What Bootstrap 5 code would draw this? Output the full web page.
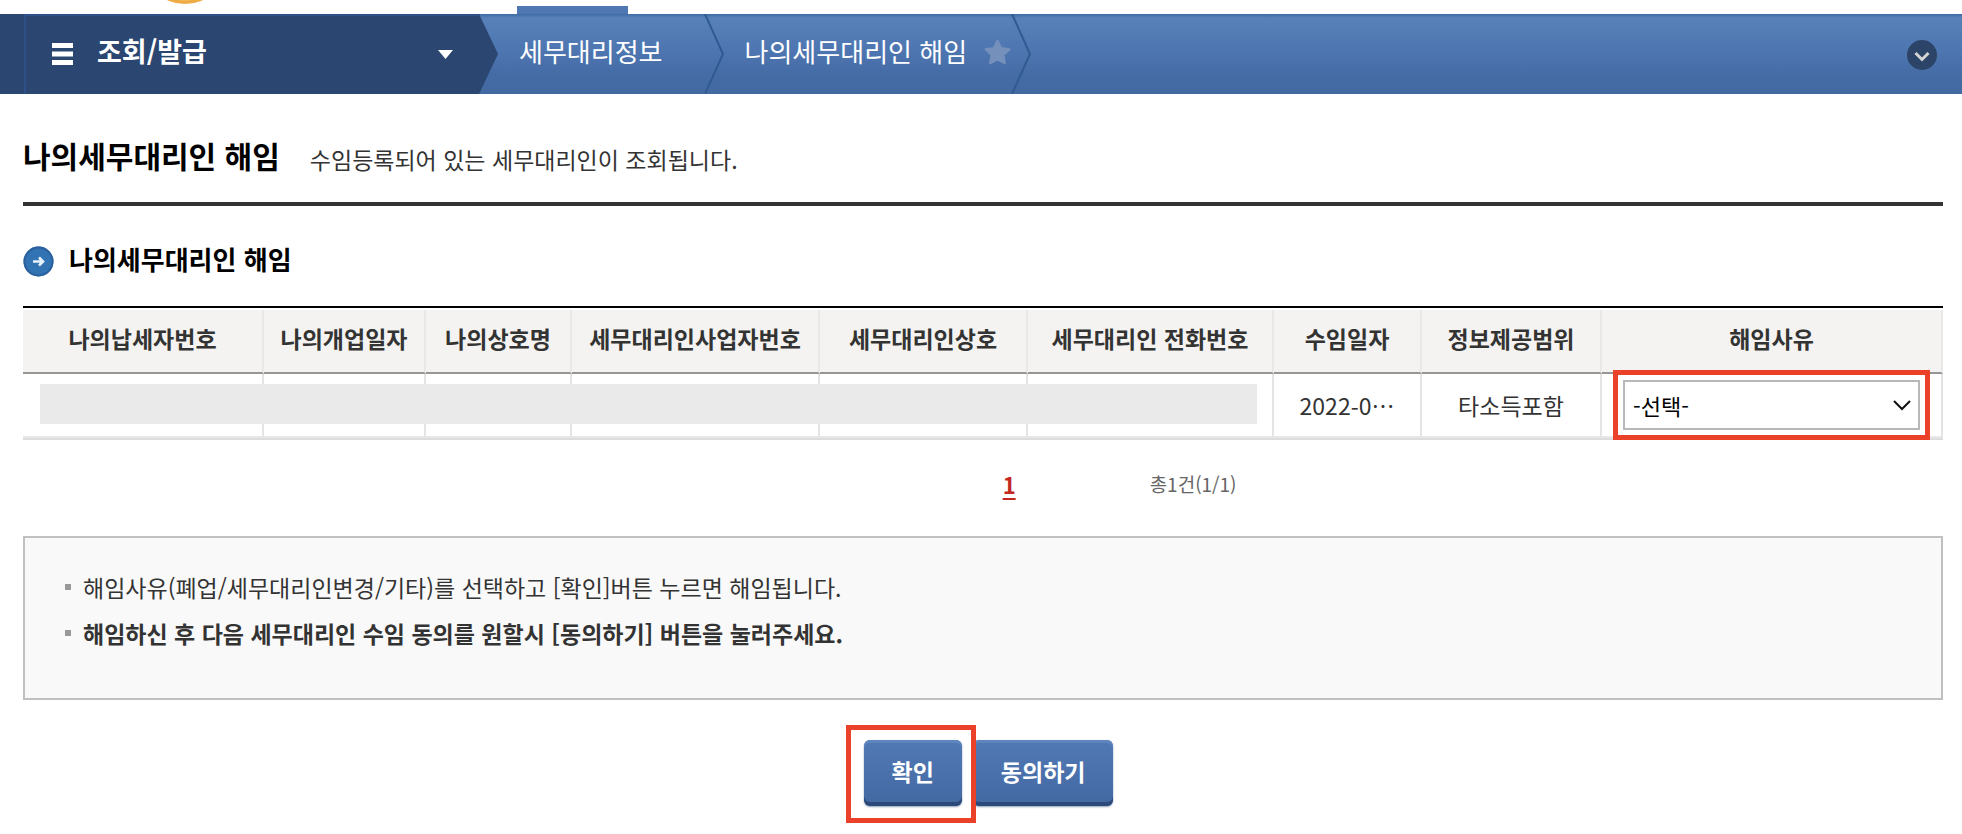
<!DOCTYPE html>
<html lang="ko">
<head>
<meta charset="utf-8">
<meta name="viewport" content="width=device-width, initial-scale=1">
<title>나의세무대리인 해임</title>
<link href="https://cdn.jsdelivr.net/npm/bootstrap@5.3.0/dist/css/bootstrap.min.css" rel="stylesheet">
<style>
  body { font-family: "Noto Sans CJK KR", sans-serif; font-size: 23px; line-height: 32px; color: #333; background: #fff; }
  .topstrip { height: 14px; overflow: hidden; }
  .topstrip svg { margin-left: 165px; }
  .active-tab { width: 111px; height: 8px; margin-left: 312px; background: #4f78b3; }
  .crumbbar { height: 80px; background: linear-gradient(#3f6ca6 0, #5881b9 4px, #5079b3 35%, #466ca6 75%, #4369a3); color: #fff; font-size: 26px; }
  .crumbbar a, .crumbbar button { color: inherit; text-decoration: none; }
  .menu-toggle { width: 498px; padding: 0 45px 0 28px; margin: 0; border: 0; border-left: 24px solid #2a4671; background: #2a4671; clip-path: polygon(0 0, 479px 0, 100% 50%, 479px 100%, 0 100%); box-shadow: inset 2px 2px #2e5088; }
  .menu-title { font-size: 27px; font-weight: 700; margin-left: 24px; padding-bottom: 6px; }
  .crumb { padding: 0 41px 6px 21px; }
  .crumb-current { padding-right: 17px; }
  .star-btn, .round-btn { border: 0; background: none; padding: 0; line-height: 0; }
  .star-btn { padding-bottom: 4px; }
  .round-btn { margin-right: 25px; padding-top: 2px; }
  main { padding: 0 19px 20px 23px; }
  .page-head { padding: 41px 0 27px; border-bottom: 4px solid #333; gap: 30px; }
  .page-head h1 { font-size: 30px; line-height: 40px; font-weight: 700; color: #000; margin: 0; }
  .section-head { padding: 33px 0 27px; gap: 15px; }
  .section-head h2 { font-size: 26px; line-height: 40px; font-weight: 700; color: #000; margin: 0; }
  .section-head svg { margin-top: 4px; }
  .grid-wrap { border-top: 2px solid #000; padding-top: 2px; border-bottom: 2px solid #dcdcdc; }
  .agent-grid { table-layout: fixed; width: 100%; text-align: center; border-collapse: separate; border-spacing: 0; }
  .agent-grid th, .agent-grid td { padding: 0; height: 64px; border-right: 2px solid #e4e4e4; white-space: nowrap; vertical-align: middle; }
  .agent-grid th { background: #f4f3f1; border-right-color: #e9e8e6; border-bottom: 2px solid #969696; font-weight: 700; padding-bottom: 6px; }
  .agent-grid td { border-bottom: 2px solid #e8e8e8; }
  .masked { left: 17px; width: 63.4%; top: 76px; height: 40px; background: #eaeaea; }
  .reason { display: block; width: calc(100% - 42px); height: 50px; margin: 0 21px; border: 2px solid #b8b8b8; border-radius: 0; padding: 0 40px 0 8px; font-size: 22px; line-height: 32px; color: #000; background-color: #fff; background-position: right 6px center; background-size: 20px 20px; background-image: url("data:image/svg+xml,%3Csvg xmlns='http://www.w3.org/2000/svg' viewBox='0 0 20 20'%3E%3Cpath d='M2 6l8 8 8-8' fill='none' stroke='%23111' stroke-width='2'/%3E%3C/svg%3E"); outline: 5px solid #eb4128; outline-offset: 5px; }
  .reason:focus { box-shadow: none; }
  .pager { padding-top: 28px; height: 96px; }
  .page-no { width: 51.7%; text-align: right; }
  .page-no a { color: #c2281d; font-size: 22px; font-weight: 700; text-decoration: underline; text-decoration-thickness: 2px; text-underline-offset: 4px; }
  .page-sum { font-size: 19px; color: #666; margin-left: 134px; }
  .notice { border: 2px solid #c0c0c0; background: #f9f9f9; padding: 26px 40px 42px; margin: 0; list-style: none; line-height: 46px; }
  .notice li { display: flex; align-items: center; gap: 12px; }
  .notice li::before { content: ""; width: 6px; height: 6px; background: #999; flex: none; }
  .actions { padding: 40px 0 0 11px; gap: 11px; }
  .action { border: 0; border-radius: 6px; height: 66px; padding: 0 28px 4px; color: #fff; font-size: 23px; font-weight: 700; background: linear-gradient(#5179b4, #4369a3); box-shadow: inset 0 -4px #2c4a79, inset 0 3px #5e85bd, 0 1px 2px #8fa0bb; }
  .action:hover { color: #fff; background: #4369a3; }
  .picked::after { content: ""; position: absolute; z-index: 2; inset: -15px -14px -17px -18px; border: 5px solid #eb4128; pointer-events: none; }
</style>
</head>
<body>
<div class="topstrip d-flex align-items-end">
  <svg class="align-self-start" width="40" height="6" viewBox="0 0 40 6" aria-hidden="true"><circle cx="20" cy="-40" r="44" fill="#f5c069"/><circle cx="20" cy="-40" r="42" fill="none" stroke="#efab45" stroke-width="3"/></svg>
  <div class="active-tab"></div>
</div>
<nav class="crumbbar d-flex align-items-stretch" aria-label="현재 위치">
  <button type="button" class="menu-toggle d-flex align-items-center">
    <svg width="21" height="22" viewBox="0 0 21 22" fill="#fff" aria-hidden="true"><path d="M0 0h21v5H0zM0 8.500h21v5H0zM0 17h21v5H0z"/></svg>
    <span class="menu-title">조회/발급</span>
    <svg class="ms-auto" width="15" height="9" viewBox="0 0 15 9" aria-hidden="true"><path d="M0 0h15L7.500 9z" fill="#fff"/></svg>
  </button>
  <a href="#" class="crumb d-flex align-items-center">세무대리정보</a>
  <svg width="20" height="80" viewBox="0 0 20 80" fill="none" aria-hidden="true"><path d="M1 0l18 40L1 80" stroke="#2f5b91" stroke-width="2"/></svg>
  <a href="#" class="crumb crumb-current d-flex align-items-center">나의세무대리인 해임</a>
  <button type="button" class="star-btn" aria-label="즐겨찾기"><svg width="27" height="26" viewBox="0 0 27 26" aria-hidden="true"><path d="M13.500 1.500l3.700 7.600 8.300 1.100-6.100 5.800 1.500 8.300-7.400-4-7.400 4L7.600 16 1.500 10.200l8.300-1.100z" fill="#7590bb" stroke="#7590bb" stroke-width="2" stroke-linejoin="round"/></svg></button>
  <svg width="20" height="80" viewBox="0 0 20 80" fill="none" aria-hidden="true"><path d="M1 0l18 40L1 80" stroke="#2f5b91" stroke-width="2"/></svg>
  <button type="button" class="round-btn ms-auto" aria-label="펼치기"><svg width="30" height="30" viewBox="0 0 30 30" aria-hidden="true"><circle cx="15" cy="15" r="15" fill="#2c4467"/><path d="M8.500 13l6.500 6.500 6.500-6.500" fill="none" stroke="#d3d5d2" stroke-width="3"/></svg></button>
</nav>
<main>
  <header class="page-head d-flex align-items-center">
    <h1>나의세무대리인 해임</h1>
    <span class="pt-2">수임등록되어 있는 세무대리인이 조회됩니다.</span>
  </header>
  <div class="section-head d-flex align-items-center">
    <svg width="31" height="31" viewBox="0 0 31 31" aria-hidden="true"><circle cx="15.500" cy="15.500" r="15" fill="#3273b3"/><circle cx="15.500" cy="15.500" r="14" fill="none" stroke="#2b609c" stroke-width="2"/><path d="M10 15.500h10M16 11.500l4 4-4 4" fill="none" stroke="#e8f2fb" stroke-width="2.600"/></svg>
    <h2>나의세무대리인 해임</h2>
  </div>
  <div class="grid-wrap position-relative">
    <table class="agent-grid">
      <colgroup><col style="width:241px"><col style="width:162px"><col style="width:146px"><col style="width:248px"><col style="width:208px"><col style="width:246px"><col style="width:148px"><col style="width:180px"><col style="width:341px"></colgroup>
      <thead><tr><th scope="col">나의납세자번호</th><th scope="col">나의개업일자</th><th scope="col">나의상호명</th><th scope="col">세무대리인사업자번호</th><th scope="col">세무대리인상호</th><th scope="col">세무대리인 전화번호</th><th scope="col">수임일자</th><th scope="col">정보제공범위</th><th scope="col" id="reason-label">해임사유</th></tr></thead>
      <tbody><tr><td></td><td></td><td></td><td></td><td></td><td></td><td>2022-0⋯</td><td>타소득포함</td>
        <td><select class="form-select reason" aria-labelledby="reason-label"><option>-선택-</option><option>폐업</option><option>세무대리인변경</option><option>기타</option></select></td></tr></tbody>
    </table>
    <div class="masked position-absolute"></div>
  </div>
  <div class="pager d-flex">
    <div class="page-no"><a href="#" aria-current="page">1</a></div>
    <div class="page-sum">총1건(1/1)</div>
  </div>
  <ul class="notice">
    <li>해임사유(폐업/세무대리인변경/기타)를 선택하고 [확인]버튼 누르면 해임됩니다.</li>
    <li class="fw-bold">해임하신 후 다음 세무대리인 수임 동의를 원할시 [동의하기] 버튼을 눌러주세요.</li>
  </ul>
  <div class="actions d-flex justify-content-center">
    <div class="picked position-relative"><button type="button" class="btn action">확인</button></div>
    <button type="button" class="btn action">동의하기</button>
  </div>
</main>
<script src="https://cdn.jsdelivr.net/npm/bootstrap@5.3.0/dist/js/bootstrap.bundle.min.js"></script>
</body>
</html>
